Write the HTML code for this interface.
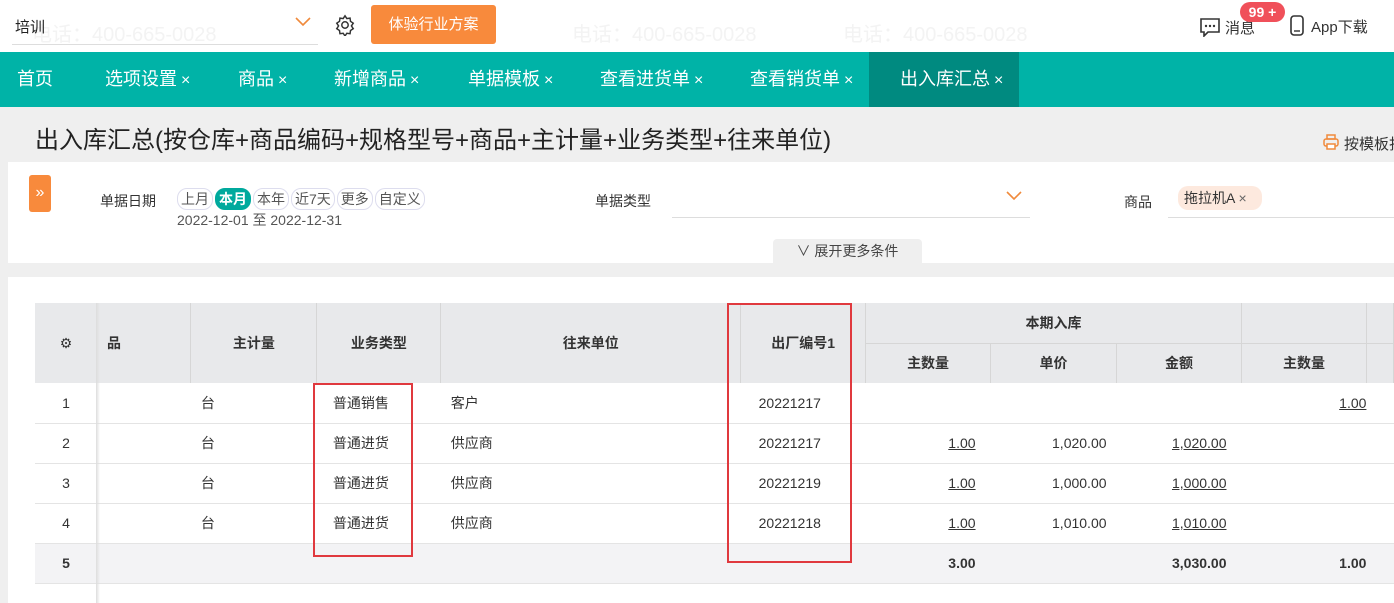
<!DOCTYPE html>
<html><head><meta charset="utf-8"><style>
*{box-sizing:border-box;margin:0;padding:0}
body{width:1394px;height:603px;overflow:hidden;background:#efefef;font-family:"Liberation Sans","Noto Sans CJK SC",sans-serif;color:#333;position:relative}
.a{position:absolute;white-space:nowrap}
.wm{position:absolute;color:#f3f3f3;font-size:20px;white-space:nowrap;z-index:1;pointer-events:none}
.tab{position:absolute;top:52px;height:55px;line-height:55px;color:#fff;font-size:18px}
.tab span{font-size:16px;margin-left:4px}
table{border-collapse:collapse;position:absolute;left:35px;top:303px;font-size:14px;z-index:2}
td{height:40px;border-bottom:1px solid #e4e4e4;padding:0 10px}
.h td{background:#e8e9eb;border-right:1px solid #d6d6d6;font-weight:bold;text-align:center;border-bottom:none}
.c{text-align:center}
.bt{padding-left:16px}.sn{padding-left:18px}
.r{text-align:right}.u{text-decoration:underline}
.tot td{background:#f3f3f5;font-weight:bold}
.pill{display:inline-block;border:1px solid #dde;border-radius:10px;padding:0 3px;margin-right:2px;font-size:14px;color:#555;height:22px;line-height:20px}
</style></head><body>
<div class="a" style="left:0;top:0;width:1394px;height:52px;background:#fff"></div>
<div class="wm" style="left:32px;top:18px">电话：400-665-0028</div><div class="wm" style="left:572px;top:18px">电话：400-665-0028</div><div class="wm" style="left:843px;top:18px">电话：400-665-0028</div>
<div class="a" style="left:15px;top:16px;font-size:15px;color:#222;z-index:2">培训</div>
<div class="a" style="left:12px;top:44px;width:306px;height:1px;background:#ddd"></div>
<svg class="a" style="left:295px;top:17px" width="16" height="10"><path d="M1 1l7 7 7-7" stroke="#f08a3c" stroke-width="1.6" fill="none"/></svg>
<svg class="a" style="left:334px;top:14px" width="22" height="22" viewBox="0 0 24 24"><path d="M12 2l2 3 3.5-.5.5 3.5 3 2-2 3 2 3-3 2-.5 3.5-3.5-.5-2 3-2-3-3.5.5-.5-3.5-3-2 2-3-2-3 3-2 .5-3.5 3.5.5z" stroke="#333" stroke-width="1.6" fill="none"/><circle cx="12" cy="12" r="3.5" stroke="#333" stroke-width="1.6" fill="none"/></svg>
<div class="a" style="left:371px;top:5px;width:125px;height:39px;background:#f88a3c;border-radius:3px;color:#fff;font-size:15px;line-height:39px;text-align:center">体验行业方案</div>
<svg class="a" style="left:1199px;top:17px" width="22" height="20"><path d="M2 2h18v13H9l-4 4v-4H2z" stroke="#333" stroke-width="1.6" fill="none"/><circle cx="7" cy="9" r="1.2" fill="#333"/><circle cx="11" cy="9" r="1.2" fill="#333"/><circle cx="15" cy="9" r="1.2" fill="#333"/></svg>
<div class="a" style="left:1225px;top:17px;font-size:15px">消息</div>
<div class="a" style="left:1240px;top:2px;width:45px;height:20px;background:#f0505a;border-radius:10px;color:#fff;font-size:14px;font-weight:bold;text-align:center;line-height:20px">99 +</div>
<svg class="a" style="left:1289px;top:15px" width="16" height="22"><rect x="2" y="1" width="12" height="19" rx="3" stroke="#333" stroke-width="1.6" fill="none"/><path d="M5 16h6" stroke="#333" stroke-width="1.4"/></svg>
<div class="a" style="left:1311px;top:16px;font-size:15px">App下载</div>
<div class="a" style="left:0;top:52px;width:1394px;height:55px;background:#00b3a7"></div>
<div class="a" style="left:869px;top:52px;width:150px;height:55px;background:#008a80"></div>
<div class="tab" style="left:17px">首页</div>
<div class="tab" style="left:105px">选项设置<span>×</span></div>
<div class="tab" style="left:238px">商品<span>×</span></div>
<div class="tab" style="left:334px">新增商品<span>×</span></div>
<div class="tab" style="left:468px">单据模板<span>×</span></div>
<div class="tab" style="left:600px">查看进货单<span>×</span></div>
<div class="tab" style="left:750px">查看销货单<span>×</span></div>
<div class="tab" style="left:900px">出入库汇总<span>×</span></div>
<div class="a" style="left:35px;top:120px;font-size:24px;color:#222">出入库汇总(按仓库+商品编码+规格型号+商品+主计量+业务类型+往来单位)</div>
<svg class="a" style="left:1323px;top:134px" width="16" height="16"><rect x="4" y="1" width="8" height="4" stroke="#f08a3c" fill="none" stroke-width="1.5"/><rect x="1" y="5" width="14" height="7" rx="2" stroke="#f08a3c" fill="none" stroke-width="1.5"/><rect x="4" y="10" width="8" height="5" stroke="#f08a3c" fill="#fff" stroke-width="1.5"/></svg>
<div class="a" style="left:1344px;top:133px;font-size:15px">按模板打印</div>
<div class="a" style="left:8px;top:162px;width:1386px;height:101px;background:#fff"></div>
<div class="a" style="left:29px;top:175px;width:22px;height:37px;background:#f88a3c;border-radius:3px;color:#fff;font-size:16px;line-height:35px;text-align:center">»</div>
<div class="a" style="left:100px;top:191px;font-size:14px">单据日期</div>
<div class="a" style="left:177px;top:188px"><span class="pill">上月</span><span class="pill" style="background:#00a99d;color:#fff;border-color:#00a99d;font-weight:bold">本月</span><span class="pill">本年</span><span class="pill">近7天</span><span class="pill">更多</span><span class="pill">自定义</span></div>
<div class="a" style="left:177px;top:210px;font-size:14px;color:#555">2022-12-01 至 2022-12-31</div>
<div class="a" style="left:595px;top:191px;font-size:14px">单据类型</div>
<div class="a" style="left:672px;top:217px;width:358px;height:1px;background:#ddd"></div>
<svg class="a" style="left:1006px;top:191px" width="16" height="10"><path d="M1 1l7 7 7-7" stroke="#f08a3c" stroke-width="1.6" fill="none"/></svg>
<div class="a" style="left:1124px;top:192px;font-size:14px">商品</div>
<div class="a" style="left:1168px;top:217px;width:226px;height:1px;background:#ddd"></div>
<div class="a" style="left:1178px;top:186px;width:84px;height:24px;background:#fde9de;border-radius:10px;font-size:14px;line-height:24px;padding-left:6px">拖拉机A <span style="color:#666">×</span></div>
<div class="a" style="left:773px;top:239px;width:149px;height:24px;background:#efefef;border-radius:4px 4px 0 0;font-size:14px;line-height:24px;text-align:center;color:#444">∨ 展开更多条件</div>
<div class="a" style="left:8px;top:277px;width:1386px;height:326px;background:#fff"></div>
<table>
<tr class="h"><td rowspan="2" class="c" style="width:62px;border-right:none;font-weight:normal">⚙</td><td rowspan="2" style="width:94px;text-align:left">品</td><td rowspan="2" style="width:126px">主计量</td><td rowspan="2" style="width:124px">业务类型</td><td rowspan="2" style="width:300px">往来单位</td><td rowspan="2" style="width:125px">出厂编号1</td><td colspan="3" style="border-bottom:1px solid #d6d6d6">本期入库</td><td style="width:125px;border-bottom:1px solid #d6d6d6"></td><td style="border-bottom:1px solid #d6d6d6"></td></tr>
<tr class="h"><td style="width:125px">主数量</td><td style="width:126px">单价</td><td style="width:125px">金额</td><td>主数量</td><td style="width:27px"></td></tr>
<tr><td class="c">1</td><td></td><td>台</td><td class="bt">普通销售</td><td>客户</td><td class="sn">20221217</td><td></td><td></td><td></td><td class="r u" style="padding-right:0">1.00</td><td></td></tr>
<tr><td class="c">2</td><td></td><td>台</td><td class="bt">普通进货</td><td>供应商</td><td class="sn">20221217</td><td class="r u" style="padding-right:15px">1.00</td><td class="r">1,020.00</td><td class="r u" style="padding-right:15px">1,020.00</td><td></td><td></td></tr>
<tr><td class="c">3</td><td></td><td>台</td><td class="bt">普通进货</td><td>供应商</td><td class="sn">20221219</td><td class="r u" style="padding-right:15px">1.00</td><td class="r">1,000.00</td><td class="r u" style="padding-right:15px">1,000.00</td><td></td><td></td></tr>
<tr><td class="c">4</td><td></td><td>台</td><td class="bt">普通进货</td><td>供应商</td><td class="sn">20221218</td><td class="r u" style="padding-right:15px">1.00</td><td class="r">1,010.00</td><td class="r u" style="padding-right:15px">1,010.00</td><td></td><td></td></tr>
<tr class="tot"><td class="c">5</td><td></td><td></td><td></td><td></td><td></td><td class="r" style="padding-right:15px">3.00</td><td></td><td class="r" style="padding-right:15px">3,030.00</td><td class="r" style="padding-right:0">1.00</td><td></td></tr>
</table>
<div class="a" style="left:96px;top:303px;width:4px;height:300px;background:linear-gradient(90deg,#ddd,rgba(255,255,255,0));z-index:3"></div>
<div class="a" style="left:313px;top:383px;width:100px;height:174px;border:2px solid #e0393e;z-index:3"></div>
<div class="a" style="left:727px;top:303px;width:125px;height:260px;border:2px solid #e0393e;z-index:3"></div>
</body></html>
